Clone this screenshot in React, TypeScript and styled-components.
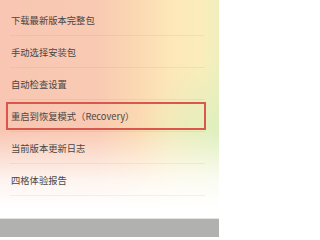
import React from 'react';
import styled, {createGlobalStyle} from "styled-components";

const items = [
    '下载最新版本完整包',
    '手动选择安装包',
    '自动检查设置',
    '重启到恢复模式（Recovery）',
    '当前版本更新日志',
    '四格体验报告',
]

function App() {
    return (
        <>
            <GlobalStyle/>
            <Screen>
                <List>
                    {items.map((item, i) => (
                        <Row key={item} $highlighted={i === 3}>
                            <Label>{item}</Label>
                        </Row>
                    ))}
                </List>
                <BottomBar/>
            </Screen>
        </>
    )
}

export default App;

const GlobalStyle = createGlobalStyle`
    html, body {
        margin: 0;
        padding: 0;
        background: #ffffff;
    }
`
const Screen = styled.div`
    width: 219px;
    height: 237px;
    display: flex;
    flex-direction: column;
    overflow: hidden;
    background: linear-gradient(to bottom, rgba(255, 255, 255, 0) 0%, rgba(255, 255, 255, 0) 55%, rgba(255, 255, 255, 0.8) 76%, #ffffff 88%),
    radial-gradient(ellipse 80px 80px at 100% 58%, rgba(218, 239, 190, 0.85), rgba(218, 239, 190, 0) 100%),
    linear-gradient(to right, #f8c6b3 0%, #f9cab2 45%, #fbd8b2 62%, #fde7b8 78%, #fbedbb 92%, #f0efbe 100%);
`
const List = styled.div`
    flex: 1;
    display: flex;
    flex-direction: column;
    padding: 4px 14px 0 10px;
`
const Row = styled.div<{ $highlighted?: boolean }>`
    position: relative;
    height: 31px;
    display: flex;
    align-items: center;
    border-bottom: 1px solid rgba(120, 110, 100, 0.09);

    ${props => props.$highlighted && `
        &::after {
            content: '';
            position: absolute;
            top: 2px;
            bottom: 1px;
            left: -4px;
            right: -1px;
            border: 2px solid #d9574b;
        }
    `}
`
const Label = styled.span`
    padding-left: 1px;
    font-family: "Noto Sans CJK SC", "Noto Sans", sans-serif;
    font-size: 9.3px;
    color: #4b4644;
    white-space: nowrap;
`
const BottomBar = styled.div`
    height: 18px;
    background-color: #b1b1af;
    border-top: 1px solid #e4e4e2;
`
